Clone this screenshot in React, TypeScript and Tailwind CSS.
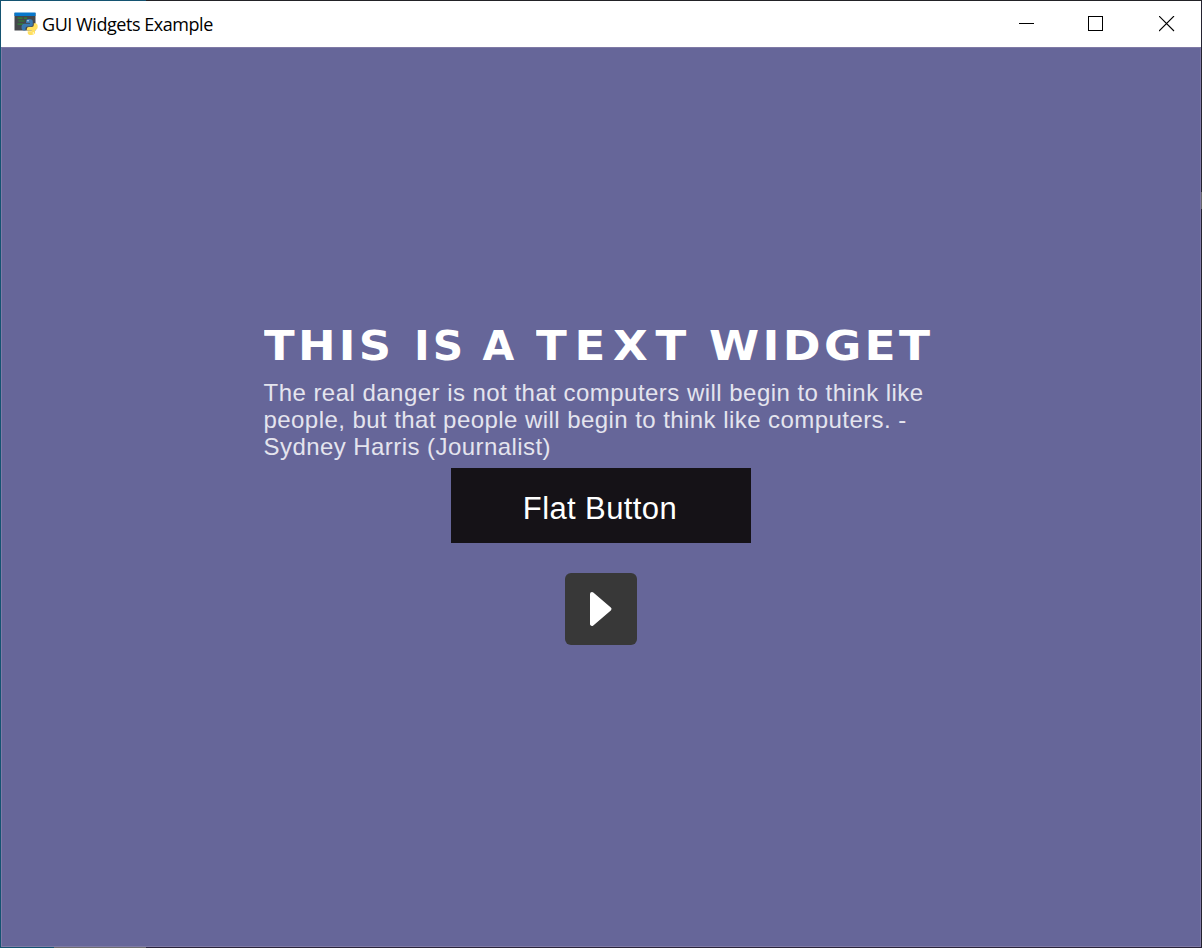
const quote = [
  { text: "The real danger is not that computers will begin to think like", spacing: "tracking-[0.47px]" },
  { text: "people, but that people will begin to think like computers. -", spacing: "tracking-[0.44px]" },
  { text: "Sydney Harris (Journalist)", spacing: "tracking-[0.44px]" },
];

const heading = [
  { text: "THIS", style: "w-[150px] tracking-[3px] scale-x-[1.095]" },
  { text: "IS", style: "w-[69px] tracking-[3px] scale-x-[1.03]" },
  { text: "A", style: "w-[53px]" },
  { text: "TEXT", style: "w-[173px] tracking-[7px] scale-x-[1.1]" },
  { text: "WIDGET", style: "w-[230px] tracking-[3px] scale-x-[1.11]" },
];

function AppIcon() {
  return (
    <svg width="26" height="24" viewBox="0 0 26 24" className="shrink-0">
      <rect x="1.500" y="1" width="21" height="17.500" fill="#44474b" />
      <rect x="1.500" y="0.500" width="21" height="3.500" fill="#0878cc" />
      <path d="M4.500 6.200h5M5.500 9h6M4.500 12.200h6M11 6.200h3" stroke="#2c8a35" strokeWidth="1.2" />
      <path
        d="M16 7q-3 0-3 2.200v1.700h4v.8h-5.500q-3 .3-3 3.500 0 3 2.500 3.300h1.500v-2q0-2 2-2h3.500q1.800 0 1.800-1.900V9.500Q20 7 16 7z"
        fill="#397ab2"
      />
      <path
        d="M18 23q-3.300 0-3.300-2.300v-1.500h4.100v-.7h-5v-1.300q0-2.200 2-2.200h3q2 0 2-2v-1.800h1.500q2.400.2 2.400 3.200 0 3.200-2.700 3.700v2.500Q22 23 18 23z"
        fill="#ffe05f"
      />
      <circle cx="15" cy="8.800" r=".7" fill="white" />
      <circle cx="20.300" cy="21" r=".7" fill="white" />
    </svg>
  );
}

function TitleBar() {
  return (
    <header className="flex h-[46px] shrink-0 items-center justify-between bg-white text-black">
      <div className="flex h-full items-center pl-3">
        <AppIcon />
        <h1 className="ml-[3px] whitespace-nowrap font-['Open_Sans','Noto_Sans',sans-serif] text-[18px] leading-6 tracking-[-0.45px]">
          GUI Widgets Example
        </h1>
      </div>
      <div className="flex h-full">
        <button aria-label="Minimize" className="flex w-[70px] items-center justify-center pl-[2px]">
          <svg width="16" height="16" viewBox="0 0 16 16" shapeRendering="crispEdges">
            <path d="M0 7.500h15" stroke="currentColor" />
          </svg>
        </button>
        <button aria-label="Maximize" className="flex w-[70px] items-center justify-center">
          <svg width="16" height="16" viewBox="0 0 16 16" shapeRendering="crispEdges">
            <path d="M.5 .5h14v14H.5z" fill="none" stroke="currentColor" />
          </svg>
        </button>
        <button aria-label="Close" className="flex w-[70px] items-center justify-center pl-[2px]">
          <svg width="16" height="16" viewBox="0 0 16 16">
            <path d="M0 0l15 15M15 0L0 15" stroke="currentColor" strokeWidth="1.1" />
          </svg>
        </button>
      </div>
    </header>
  );
}

export default function App() {
  return (
    <div className="flex h-[948px] w-[1202px] flex-col overflow-hidden bg-[#666699]">
      <div className="flex h-px shrink-0">
        <div className="w-[146px] bg-[#145371]" />
        <div className="grow bg-[#222226]" />
      </div>
      <div className="flex min-h-0 grow">
        <div className="w-px shrink-0 bg-[#145371]" />
        <div className="flex min-w-0 grow flex-col">
          <TitleBar />
          <main className="flex grow flex-col items-center border border-[#7f7aa6] bg-[#666699] font-['Liberation_Sans',Arial,sans-serif] text-white">
            <section className="mt-[271px] w-[675px]">
              <h2 className="flex h-[54px] items-center whitespace-nowrap font-['DejaVu_Sans',sans-serif] text-[41px] font-bold leading-[48px]">
                {heading.map((word) => (
                  <span key={word.text} className={`${word.style} origin-left`}>
                    {word.text}{" "}
                  </span>
                ))}
              </h2>
              <div className="mt-[6px] text-[24px] leading-[27px] text-[#e4e4ee]">
                {quote.map((line) => (
                  <p key={line.text} className="whitespace-nowrap">
                    <span className={line.spacing}>{line.text}</span>
                  </p>
                ))}
              </div>
            </section>
            <button className="mt-[8px] h-[75px] w-[300px] shrink-0 bg-[#151217] pr-[2px] pt-[6px] text-[31px] leading-9 tracking-[0.4px]">
              Flat Button
            </button>
            <button
              aria-label="Play"
              className="mt-[30px] flex size-[72px] shrink-0 items-center justify-center rounded-[6px] bg-[#383838]"
            >
              <svg width="72" height="72" viewBox="0 0 72 72">
                <path d="M27 21v30M27 21l17.500 15L27 51z" fill="white" stroke="white" strokeWidth="4" strokeLinejoin="round" />
              </svg>
            </button>
          </main>
        </div>
        <div className="flex w-px shrink-0 flex-col bg-[#242330]">
          <div className="mt-[191px] h-[17px] bg-[#656568]" />
        </div>
      </div>
      <div className="flex h-px shrink-0">
        <div className="w-[54px] bg-[#145371]" />
        <div className="w-[92px] bg-[#6d6d70]" />
        <div className="grow bg-[#29243a]" />
      </div>
    </div>
  );
}
